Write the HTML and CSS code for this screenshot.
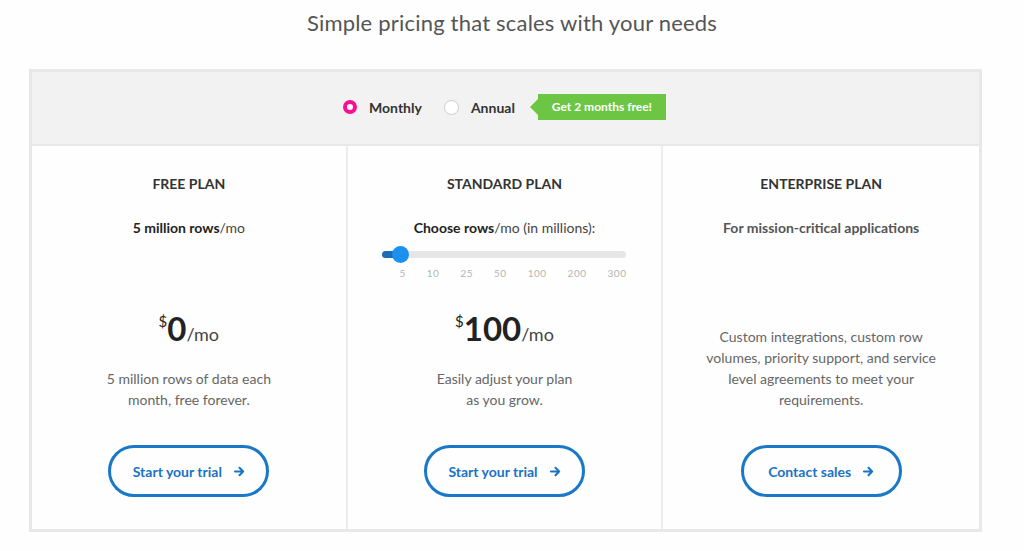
FILE: index.html
```html
<!DOCTYPE html>
<html lang="en">
<head>
    <meta charset="UTF-8">
    <meta name="viewport" content="width=device-width, initial-scale=1.0">
    <title>Pricing</title>
    <link rel="stylesheet" href="styles.css">
</head>
<body>

<h1 class="page-title">Simple pricing that scales with your needs</h1>

<div class="pricing">
    <div class="billing">
        <label class="billing-option">
            <span class="radio radio-on"></span>
            Monthly
        </label>
        <label class="billing-option">
            <span class="radio"></span>
            Annual
        </label>
        <span class="badge">Get 2 months free!</span>
    </div>

    <div class="plans">
        <div class="plan">
            <h2 class="plan-name">FREE PLAN</h2>
            <p class="plan-sub"><b>5 million rows</b>/mo</p>
            <div class="plan-bottom">
                <div class="price"><span class="cur">$</span><span class="amount">0</span><span class="per">/mo</span></div>
                <p class="plan-desc">5 million rows of data each<br>month, free forever.</p>
                <a class="cta" href="#">Start your trial <svg class="arrow" viewBox="0 0 12 12"><path d="M1 6h9M6 2l4 4-4 4" /></svg></a>
            </div>
        </div>

        <div class="plan">
            <h2 class="plan-name">STANDARD PLAN</h2>
            <p class="plan-sub"><b>Choose rows</b>/mo (in millions):</p>
            <div class="slider">
                <div class="track"><div class="track-fill"></div><div class="thumb"></div></div>
                <div class="ticks">
                    <span>5</span><span>10</span><span>25</span><span>50</span><span>100</span><span>200</span><span>300</span>
                </div>
            </div>
            <div class="plan-bottom">
                <div class="price"><span class="cur">$</span><span class="amount">100</span><span class="per">/mo</span></div>
                <p class="plan-desc">Easily adjust your plan<br>as you grow.</p>
                <a class="cta" href="#">Start your trial <svg class="arrow" viewBox="0 0 12 12"><path d="M1 6h9M6 2l4 4-4 4" /></svg></a>
            </div>
        </div>

        <div class="plan">
            <h2 class="plan-name">ENTERPRISE PLAN</h2>
            <p class="plan-sub plan-sub-muted"><b>For mission-critical applications</b></p>
            <div class="plan-bottom">
                <p class="plan-desc">Custom integrations, custom row<br>volumes, priority support, and service<br>level agreements to meet your<br>requirements.</p>
                <a class="cta" href="#">Contact sales <svg class="arrow" viewBox="0 0 12 12"><path d="M1 6h9M6 2l4 4-4 4" /></svg></a>
            </div>
        </div>
    </div>
</div>

</body>
</html>
```

FILE: styles.css
```css
body {
    font-family: 'Lato', 'Open Sans', sans-serif;
    background: #fefefe;
    color: #333;
    margin: 0;
}
.page-title {
    font-size: 22px;
    font-weight: normal;
    color: #555;
    text-align: center;
    margin: 0;
    padding-top: 9px;
    height: 60px;
    line-height: 28px;
    letter-spacing: 0.2px;
}
.pricing {
    width: 947px;
    margin-left: 29px;
    border: 3px solid #e8e8e8;
}
.billing {
    background: #f2f2f2;
    border-bottom: 2px solid #e8e8e8;
    display: flex;
    align-items: center;
    justify-content: center;
    padding-right: 2px;
    padding-bottom: 2px;
    box-sizing: border-box;
    height: 74px;
}
.billing-option {
    display: flex;
    align-items: center;
    gap: 12px;
    font-size: 14px;
    font-weight: bold;
    color: #333;
    margin-right: 22px;
}
.billing-option:nth-child(2) {
    margin-right: 0;
}
.radio {
    width: 13px;
    height: 13px;
    border: 1px solid #ccc;
    border-radius: 50%;
    background: #fff;
    display: inline-block;
}
.radio-on {
    width: 6px;
    height: 6px;
    border: 4px solid #f7108f;
    background: #fff;
}
.badge {
    position: relative;
    background: #6cc644;
    color: #fff;
    font-size: 12px;
    font-weight: bold;
    padding: 0 14px;
    height: 26px;
    line-height: 26px;
    margin-left: 23px;
}
.badge::before {
    content: "";
    position: absolute;
    left: -8px;
    top: 5px;
    border-top: 8px solid transparent;
    border-bottom: 8px solid transparent;
    border-right: 8px solid #6cc644;
}
.plans {
    display: grid;
    grid-template-columns: repeat(3, 1fr);
}
.plan {
    height: 383px;
    box-sizing: border-box;
    padding: 28px 20px 32px;
    text-align: center;
    display: flex;
    flex-direction: column;
    align-items: center;
    border-right: 2px solid #ececec;
}
.plan:last-child {
    border-right: none;
}
.plan-name {
    font-size: 14px;
    font-weight: bold;
    line-height: 20px;
    margin: 0;
    color: #333;
}
.plan-sub {
    font-size: 14px;
    line-height: 20px;
    margin: 24px 0 0;
    color: #444;
}
.plan-sub b {
    color: #222;
}
.plan-sub-muted b {
    color: #555;
}
.slider {
    width: 244px;
    margin-top: 13px;
}
.track {
    position: relative;
    height: 7px;
    border-radius: 4px;
    background: #e6e6e6;
}
.track-fill {
    width: 20px;
    height: 7px;
    border-radius: 4px;
    background: #1a6cb4;
}
.thumb {
    position: absolute;
    left: 10px;
    top: -5px;
    width: 17px;
    height: 17px;
    border-radius: 50%;
    background: #1b90ee;
}
.ticks {
    display: flex;
    justify-content: space-between;
    font-size: 10px;
    color: #b5b5b5;
    margin-top: 9px;
    padding: 0 0 0 17px;
    letter-spacing: 0.5px;
}
.plan-bottom {
    margin-top: auto;
    display: flex;
    flex-direction: column;
    align-items: center;
}
.price {
    height: 40px;
    line-height: 40px;
    color: #222;
    margin-bottom: 27px;
}
.cur {
    font-size: 15px;
    vertical-align: 14px;
}
.amount {
    font-size: 33px;
    font-weight: bold;
}
.per {
    font-size: 18px;
    color: #444;
}
.plan-desc {
    font-size: 14px;
    line-height: 21px;
    color: #666;
    margin: 0 0 35px;
}
.cta {
    display: flex;
    align-items: center;
    justify-content: center;
    gap: 12px;
    width: 161px;
    height: 52px;
    box-sizing: border-box;
    border: 3px solid #1a78c9;
    border-radius: 26px;
    color: #1a73c5;
    font-size: 14px;
    font-weight: bold;
    text-decoration: none;
    padding-top: 1px;
}
.arrow {
    width: 11px;
    height: 11px;
    fill: none;
    stroke: #1a73c5;
    stroke-width: 2.2;
    stroke-linecap: round;
    stroke-linejoin: round;
}
```
